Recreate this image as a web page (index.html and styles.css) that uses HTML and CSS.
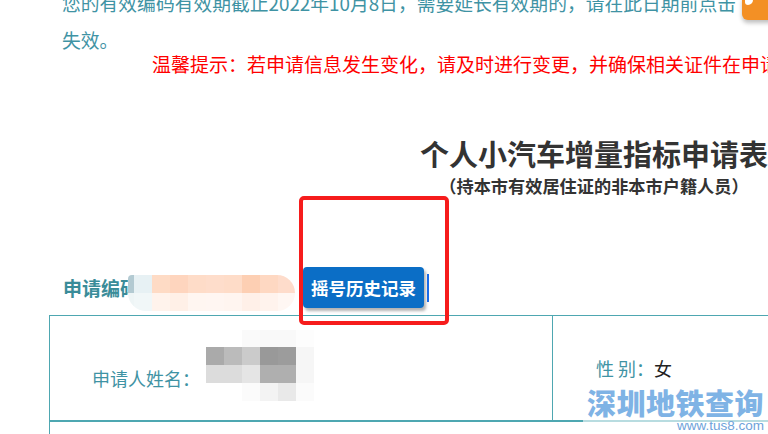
FILE: index.html
```html
<!DOCTYPE html>
<html lang="zh-CN">
<head>
    <meta charset="UTF-8">
    <meta name="viewport" content="width=device-width, initial-scale=1.0">
    <title>个人小汽车增量指标申请表</title>
    <link rel="stylesheet" href="styles.css">
</head>
<body>
    <div class="page">
        <p class="notice">您的有效编码有效期截止2022年10月8日，需要延长有效期的，请在此日期前点击<br>失效。</p>
        <p class="tip">温馨提示：若申请信息发生变化，请及时进行变更，并确保相关证件在申请有效期内。</p>

        <h1 class="title">个人小汽车增量指标申请表</h1>
        <h2 class="subtitle">（持本市有效居住证的非本市户籍人员）</h2>

        <div class="code-row">
            <span class="code-label">申请编码</span>
            <div class="blur blur-code">
                <i style="background:#b3cad2"></i><i style="background:#e7f1f4"></i><i style="background:#fedbc5"></i><i style="background:#fed5be"></i><i style="background:#fedcc8"></i><i style="background:#feddcb"></i><i style="background:#fedcc8"></i><i style="background:#fdcfb3"></i><i style="background:#fed8c2"></i><i style="background:#fedccb"></i>
                <i style="background:#eef5f6"></i><i style="background:#f1f7f8"></i><i style="background:#fff3ec"></i><i style="background:#fff0e7"></i><i style="background:#fff6f1"></i><i style="background:#fff6f2"></i><i style="background:#fff5f0"></i><i style="background:#fff0e8"></i><i style="background:#fff3ed"></i><i style="background:#fff7f3"></i>
            </div>
            <button class="history-btn">摇号历史记录</button>
            <span class="btn-edge"></span>
        </div>

        <div class="form-table">
            <div class="form-row">
                <div class="cell cell-name">
                    <span class="field">申请人姓名：</span>
                    <div class="blur blur-name">
                        <i></i><i></i><i style="background:#fafafa"></i><i style="background:#f9f9f9"></i><i style="background:#f9f9f9"></i><i style="background:#fdfdfd"></i>
                        <i style="background:#aaaaaa"></i><i style="background:#bbbbbb"></i><i style="background:#cbcbcb"></i><i style="background:#999999"></i><i style="background:#9c9c9c"></i><i style="background:#f6f6f6"></i>
                        <i style="background:#dcdcdc"></i><i style="background:#dcdcdc"></i><i style="background:#e5e5e5"></i><i style="background:#afafaf"></i><i style="background:#afafaf"></i><i style="background:#f6f6f6"></i>
                        <i></i><i></i><i style="background:#fbfbfb"></i><i style="background:#f3f3f3"></i><i style="background:#e9e9e9"></i><i style="background:#fbfbfb"></i>
                    </div>
                </div>
                <div class="cell cell-sex">
                    <span class="field">性 别：</span><span class="value">女</span>
                </div>
            </div>
            <div class="form-row form-row-next"></div>
        </div>
    </div>

    <div class="float-btn"></div>
    <div class="mark-box"></div>
    <div class="watermark">
        <span class="wm-title">深圳地铁查询</span>
        <span class="wm-url">www.tus8.com</span>
    </div>
</body>
</html>
```

FILE: styles.css
```css
:root {
    --teal: #3f93a4;
    --line: #4ea7b1;
    --font-cn: "Noto Sans CJK SC", "Liberation Sans", sans-serif;
}

html, body {
    overflow: hidden;
}

body {
    margin: 0;
    height: 434px;
    position: relative;
    background-color: #fff;
    font-family: var(--font-cn);
}

.page {
    width: 1090px;
    margin-left: 49px;
}

.notice {
    margin: -16px 0 0;
    padding-left: 13px;
    font-size: 18.8px;
    line-height: 37px;
    color: var(--teal);
    white-space: nowrap;
}

.tip {
    margin: -7px 0 0;
    padding-left: 103px;
    font-size: 19px;
    line-height: 26px;
    color: #ff0000;
    white-space: nowrap;
}

.title {
    margin: 59px 0 0;
    text-align: center;
    font-size: 29px;
    line-height: 35px;
    font-weight: bold;
    color: #333;
}

.subtitle {
    margin: 5px 0 0;
    text-align: center;
    font-size: 17.2px;
    line-height: 20px;
    font-weight: bold;
    color: #333;
}

.code-row {
    display: flex;
    align-items: center;
    height: 41px;
    margin-top: 71px;
    padding-left: 14px;
}

.code-label {
    font-size: 19px;
    font-weight: bold;
    color: #3a8c99;
    white-space: nowrap;
}

.blur {
    display: grid;
    overflow: hidden;
}

.blur i {
    display: block;
    background: #fff;
}

.blur-code {
    grid-template-columns: 6px repeat(9, 18px);
    grid-template-rows: 18px 18px;
    width: 167px;
    margin-left: -11px;
    margin-top: 11px;
    border-radius: 4px 18px 18px 18px;
}

.history-btn {
    height: 41px;
    margin-left: 8px;
    padding: 0 8px;
    border: none;
    border-radius: 4px;
    background-color: #0b6ec6;
    color: #fff;
    font-family: var(--font-cn);
    font-size: 17.5px;
    font-weight: bold;
    box-shadow: 2px 3px 3px rgba(0, 0, 0, 0.3);
    white-space: nowrap;
}

.btn-edge {
    width: 2px;
    height: 28px;
    margin-left: 3px;
    background-color: #1a6be8;
}

.form-table {
    margin-top: 7px;
    border-top: 1px solid var(--line);
    border-left: 1px solid var(--line);
}

.form-row {
    display: grid;
    grid-template-columns: 503px 1fr;
    height: 104px;
    border-bottom: 2px solid var(--line);
}

.form-row-next {
    border-bottom: none;
}

.cell {
    display: flex;
}

.cell-name {
    align-items: flex-start;
    padding: 14px 0 0 42px;
    border-right: 1px solid var(--line);
}

.cell-name .field {
    margin-top: 36px;
    margin-right: 6px;
}

.cell-sex {
    align-items: center;
    padding-left: 43px;
}

.field {
    font-size: 18px;
    line-height: 24px;
    color: var(--teal);
    white-space: pre;
}

.value {
    font-size: 18px;
    line-height: 24px;
    color: #222;
}

.blur-name {
    grid-template-columns: repeat(6, 18px);
    grid-template-rows: 17px 18px 18px 18px;
}

.float-btn {
    position: absolute;
    left: 742px;
    top: -6px;
    width: 40px;
    height: 26px;
    border-radius: 6px;
    background-color: #f39025;
    box-shadow: 0 3px 4px rgba(0, 0, 0, 0.25);
}

.float-btn::before {
    content: "";
    position: absolute;
    left: 3px;
    top: 2px;
    width: 8px;
    height: 9px;
    border-radius: 0 0 5px 3px;
    background-color: #fff;
}

.mark-box {
    position: absolute;
    left: 299px;
    top: 196px;
    width: 150px;
    height: 129px;
    box-sizing: border-box;
    border: 4px solid #f61c1c;
    border-radius: 5px;
}

.watermark {
    position: absolute;
    left: 583px;
    top: 386px;
    width: 185px;
    height: 48px;
    display: flex;
    flex-direction: column;
    align-items: flex-end;
    background-color: rgba(255, 255, 255, 0.6);
}

.wm-title {
    margin-right: 4px;
    font-size: 29px;
    line-height: 33px;
    font-weight: 900;
    letter-spacing: 0.5px;
    color: #7fb3e5;
    white-space: nowrap;
}

.wm-url {
    margin-right: 4px;
    font-family: "Liberation Sans", sans-serif;
    font-size: 13.5px;
    line-height: 14px;
    color: #6ea2da;
}
```
